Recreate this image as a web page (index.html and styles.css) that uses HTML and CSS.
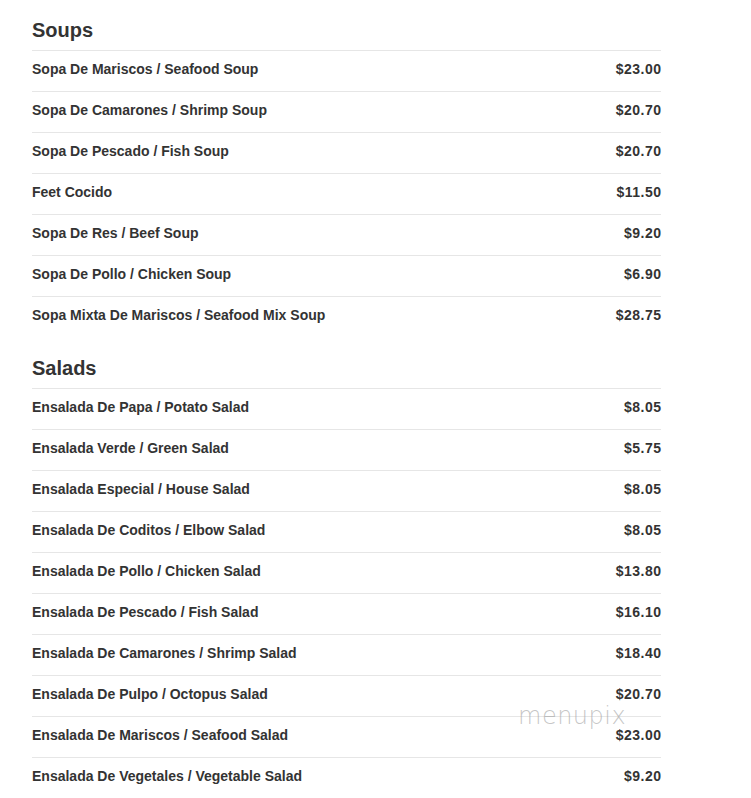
FILE: index.html
```html
<!DOCTYPE html>
<html>
<head>
<meta charset="utf-8">
<link rel="stylesheet" href="styles.css">
</head>
<body>
<main class="menu">
  <section class="section">
    <h2 class="section-title">Soups</h2>
    <div class="item"><span class="name">Sopa De Mariscos / Seafood Soup</span><span class="price">$23.00</span></div>
    <div class="item"><span class="name">Sopa De Camarones / Shrimp Soup</span><span class="price">$20.70</span></div>
    <div class="item"><span class="name">Sopa De Pescado / Fish Soup</span><span class="price">$20.70</span></div>
    <div class="item"><span class="name">Feet Cocido</span><span class="price">$11.50</span></div>
    <div class="item"><span class="name">Sopa De Res / Beef Soup</span><span class="price">$9.20</span></div>
    <div class="item"><span class="name">Sopa De Pollo / Chicken Soup</span><span class="price">$6.90</span></div>
    <div class="item"><span class="name">Sopa Mixta De Mariscos / Seafood Mix Soup</span><span class="price">$28.75</span></div>
  </section>
  <section class="section">
    <h2 class="section-title">Salads</h2>
    <div class="item"><span class="name">Ensalada De Papa / Potato Salad</span><span class="price">$8.05</span></div>
    <div class="item"><span class="name">Ensalada Verde / Green Salad</span><span class="price">$5.75</span></div>
    <div class="item"><span class="name">Ensalada Especial / House Salad</span><span class="price">$8.05</span></div>
    <div class="item"><span class="name">Ensalada De Coditos / Elbow Salad</span><span class="price">$8.05</span></div>
    <div class="item"><span class="name">Ensalada De Pollo / Chicken Salad</span><span class="price">$13.80</span></div>
    <div class="item"><span class="name">Ensalada De Pescado / Fish Salad</span><span class="price">$16.10</span></div>
    <div class="item"><span class="name">Ensalada De Camarones / Shrimp Salad</span><span class="price">$18.40</span></div>
    <div class="item"><span class="name">Ensalada De Pulpo / Octopus Salad</span><span class="price">$20.70</span></div>
    <div class="item"><span class="name">Ensalada De Mariscos / Seafood Salad</span><span class="price">$23.00</span></div>
    <div class="item"><span class="name">Ensalada De Vegetales / Vegetable Salad</span><span class="price">$9.20</span></div>
  </section>
</main>
<div class="watermark">menupix</div>
</body>
</html>
```
FILE: styles.css
```css
html, body {
  margin: 0;
  padding: 0;
  background: #fff;
}
body {
  font-family: "Liberation Sans", Arial, sans-serif;
  color: #333;
}
.menu {
  width: 629px;
  margin-left: 32px;
}
.section + .section {
  margin-top: 1px;
}
.section-title {
  margin: 0;
  padding: 18px 0 8px;
  font-size: 20px;
  line-height: 24px;
  font-weight: bold;
  color: #333;
}
.item {
  display: flex;
  justify-content: space-between;
  align-items: center;
  border-top: 1px solid #e6e6e6;
  height: 36px;
  padding-bottom: 4px;
  font-size: 14px;
  font-weight: bold;
}
.price {
  letter-spacing: 0.5px;
  margin-right: -0.5px;
}
.watermark {
  position: absolute;
  left: 518px;
  top: 702px;
  font-family: "DejaVu Sans", sans-serif;
  font-size: 24px;
  font-weight: 300;
  color: rgba(160, 160, 160, 0.6);
  letter-spacing: 0.5px;
}
```
